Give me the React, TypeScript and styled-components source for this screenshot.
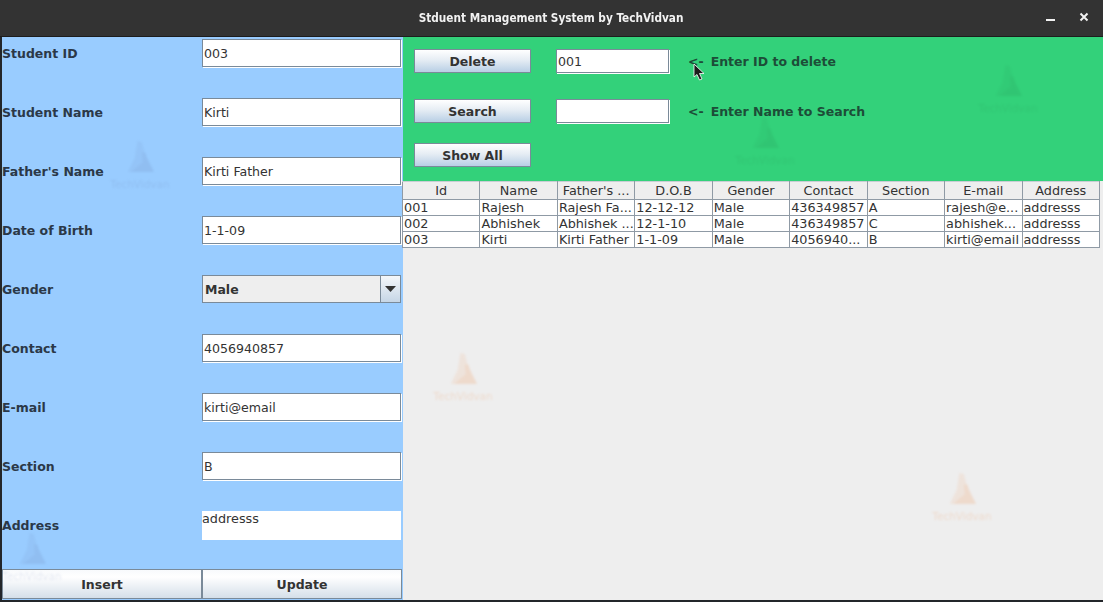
import { Fragment } from "react";
import styled, { createGlobalStyle } from "styled-components";

const GlobalStyle = createGlobalStyle`
  html, body {
    margin: 0;
    height: 100%;
    overflow: hidden;
    background: #23262a;
  }
  * { box-sizing: border-box; }
`;

const FIELDS_BEFORE = [
  { label: "Student ID", value: "003" },
  { label: "Student Name", value: "Kirti" },
  { label: "Father's Name", value: "Kirti Father" },
  { label: "Date of Birth", value: "1-1-09" },
];
const FIELDS_AFTER = [
  { label: "Contact", value: "4056940857" },
  { label: "E-mail", value: "kirti@email" },
  { label: "Section", value: "B" },
];

const COLUMNS = ["Id", "Name", "Father's ...", "D.O.B", "Gender", "Contact", "Section", "E-mail", "Address"];
const ROWS = [
  ["001", "Rajesh", "Rajesh Fa...", "12-12-12", "Male", "436349857", "A", "rajesh@e...", "addresss"],
  ["002", "Abhishek", "Abhishek ...", "12-1-10", "Male", "436349857", "C", "abhishek...", "addresss"],
  ["003", "Kirti", "Kirti Father", "1-1-09", "Male", "4056940...", "B", "kirti@email", "addresss"],
];

const MARKS = [
  { x: 108, y: 140, color: "#6f88bb", opacity: 0.2 },
  { x: 976, y: 64, color: "#2a9f5c", opacity: 0.22 },
  { x: 733, y: 116, color: "#2a9f5c", opacity: 0.22 },
  { x: 431, y: 352, color: "#eeb48c", opacity: 0.34 },
  { x: 930, y: 472, color: "#eeb48c", opacity: 0.34 },
  { x: 0, y: 532, color: "#6f88bb", opacity: 0.2 },
];

const Window = styled.div`
  position: relative;
  width: 1103px;
  height: 602px;
  overflow: hidden;
  font-family: "DejaVu Sans", sans-serif;
  background: #23262a;
`;

const TitleBar = styled.header`
  height: 37px;
  display: flex;
  align-items: center;
  justify-content: center;
  background: #333333;
  border-bottom: 1px solid #1d1d1d;
`;

const Title = styled.h1`
  margin: 0 0 1px 0;
  color: #f2f2f2;
  font-family: "DejaVu Sans Condensed", "DejaVu Sans", sans-serif;
  font-size: 13px;
  font-weight: 700;
  white-space: nowrap;
  transform: scaleX(0.9);
`;

const WindowButtons = styled.div`
  position: absolute;
  top: 12px;
  right: 14px;
  display: flex;
  align-items: center;
  gap: 24px;
`;

const Body = styled.main`
  display: grid;
  grid-template-columns: 401px 1fr;
  height: 563px;
  padding-left: 2px;
`;

const FormPanel = styled.section`
  display: flex;
  flex-direction: column;
  height: 563px;
  padding-top: 2px;
  background: #99ccff;
`;

const FormGrid = styled.div`
  flex: 1;
  display: grid;
  grid-template-columns: 200px 199px;
  grid-auto-rows: 28px;
  row-gap: 31px;
  align-items: stretch;
`;

const FieldLabel = styled.label`
  display: flex;
  align-items: center;
  padding-top: 1px;
  color: #2b3848;
  font-size: 12.5px;
  font-weight: 700;
`;

const TextInput = styled.input`
  width: 100%;
  height: 100%;
  padding: 0 1px;
  border: 1px solid #7a8a99;
  box-shadow: 1px 1px 0 #ffffff;
  background: #ffffff;
  color: #333333;
  font-family: inherit;
  font-size: 12.6px;
  outline: none;
`;

const Combo = styled.div`
  display: grid;
  grid-template-columns: 1fr 19px;
  height: 100%;
  border: 1px solid #7a8a99;
  background: #eeeeee;
`;

const ComboValue = styled.span`
  display: flex;
  align-items: center;
  padding-left: 2px;
  border-right: 1px solid #7a8a99;
  color: #333333;
  font-size: 12.5px;
  font-weight: 700;
`;

const ComboArrow = styled.span`
  display: flex;
  align-items: center;
  justify-content: center;
  background: linear-gradient(#f4f7fa, #c6d6e6);
`;

const AddressInput = styled.textarea`
  display: block;
  width: 199px;
  height: 29px;
  padding: 0;
  border: 0;
  resize: none;
  overflow: hidden;
  background: #ffffff;
  color: #333333;
  font-family: inherit;
  font-size: 12.8px;
  line-height: 15px;
  outline: none;
`;

const FormActions = styled.div`
  display: grid;
  grid-template-columns: 200px 200px;
  height: 30px;
  margin-bottom: 1px;
`;

const MetalButton = styled.button`
  padding: 0;
  border: 1px solid #7a8a99;
  background: linear-gradient(#ffffff 0%, #e6edf4 45%, #b8cfe5 100%);
  color: #333333;
  font-family: inherit;
  font-size: 12.5px;
  font-weight: 700;
`;

const ActionButton = styled(MetalButton)`
  background: linear-gradient(#f8fafc 0%, #ffffff 25%, #d5dfe9 100%);
`;

const RightPanel = styled.section`
  display: flex;
  flex-direction: column;
  height: 563px;
  background: #eeeeee;
`;

const Controls = styled.div`
  display: grid;
  grid-template-columns: 117px 113px 1fr;
  grid-template-rows: 50px 44px 24px;
  column-gap: 25px;
  height: 144px;
  padding: 12px 0 0 11px;
  background: #33d17a;
`;

const ControlButton = styled(MetalButton)`
  grid-column: 1;
  height: 24px;
`;

const SmallInput = styled(TextInput)`
  grid-column: 2;
  height: 24px;
`;

const Hint = styled.span`
  display: flex;
  gap: 7px;
  height: 24px;
  align-items: center;
  margin-left: -6px;
  color: #1d4d38;
  font-size: 12.5px;
  font-weight: 700;
`;

const TableBox = styled.table`
  width: 698px;
  margin-left: -1px;
  border-collapse: collapse;
  table-layout: fixed;
  color: #333333;
  font-size: 12.8px;
`;

const HeadCell = styled.th`
  height: 18px;
  padding: 0 0 1px;
  border: 1px solid #8f9aa5;
  border-top-color: #c8ced4;
  background: #eeeeee;
  font-weight: 400;
  text-align: center;
  white-space: nowrap;
  overflow: hidden;
`;

const Cell = styled.td`
  height: 16px;
  padding: 0 0 0 1px;
  border: 1px solid #8f9aa5;
  background: #ffffff;
  line-height: 14px;
  white-space: nowrap;
  overflow: hidden;
`;

const MarkBox = styled.div<{ $x: number; $y: number; $color: string; $opacity: number }>`
  position: absolute;
  left: ${(p) => p.$x}px;
  top: ${(p) => p.$y}px;
  width: 64px;
  display: flex;
  flex-direction: column;
  align-items: center;
  gap: 5px;
  color: ${(p) => p.$color};
  opacity: ${(p) => p.$opacity};
  pointer-events: none;
  filter: blur(0.8px);
`;

const MarkText = styled.span`
  font-size: 10.5px;
  line-height: 11px;
  white-space: nowrap;
`;

const Pointer = styled.svg`
  position: absolute;
  left: 693px;
  top: 63px;
`;

function Mark(props: { x: number; y: number; color: string; opacity: number }) {
  return (
    <MarkBox $x={props.x} $y={props.y} $color={props.color} $opacity={props.opacity}>
      <svg width="30" height="34" viewBox="0 0 34 38" fill="currentColor">
        <path d="M14 1 L19 2 L22 13 L31 36 L3 36 L11 20 Z" opacity="0.55" />
        <path d="M19 14 L23 14 L25 20 L33 36 L7 36 L15 29 L20 25 Z" />
      </svg>
      <MarkText>TechVidvan</MarkText>
    </MarkBox>
  );
}

export default function App() {
  return (
    <Window>
      <GlobalStyle />
      <TitleBar>
        <Title>Stduent Management System by TechVidvan</Title>
        <WindowButtons>
          <svg width="9" height="9" viewBox="0 0 9 9">
            <rect x="0" y="6" width="9" height="2" fill="#f2f2f2" />
          </svg>
          <svg width="10" height="10" viewBox="0 0 10 10">
            <path d="M1.5 1.5 L8.5 8.5 M8.5 1.5 L1.5 8.5" stroke="#f2f2f2" strokeWidth="2" />
          </svg>
        </WindowButtons>
      </TitleBar>
      <Body>
        <FormPanel>
          <FormGrid>
            {FIELDS_BEFORE.map((f) => (
              <Fragment key={f.label}>
                <FieldLabel>{f.label}</FieldLabel>
                <TextInput readOnly value={f.value} />
              </Fragment>
            ))}
            <FieldLabel>Gender</FieldLabel>
            <Combo>
              <ComboValue>Male</ComboValue>
              <ComboArrow>
                <svg width="11" height="6" viewBox="0 0 11 6">
                  <path d="M0 0 H11 L5.5 6 Z" fill="#333333" />
                </svg>
              </ComboArrow>
            </Combo>
            {FIELDS_AFTER.map((f) => (
              <Fragment key={f.label}>
                <FieldLabel>{f.label}</FieldLabel>
                <TextInput readOnly value={f.value} />
              </Fragment>
            ))}
            <FieldLabel>Address</FieldLabel>
            <AddressInput readOnly value="addresss" />
          </FormGrid>
          <FormActions>
            <ActionButton>Insert</ActionButton>
            <ActionButton>Update</ActionButton>
          </FormActions>
        </FormPanel>
        <RightPanel>
          <Controls>
            <ControlButton>Delete</ControlButton>
            <SmallInput readOnly value="001" />
            <Hint>
              <span>&lt;-</span>
              <span>Enter ID to delete</span>
            </Hint>
            <ControlButton>Search</ControlButton>
            <SmallInput readOnly value="" />
            <Hint>
              <span>&lt;-</span>
              <span>Enter Name to Search</span>
            </Hint>
            <ControlButton>Show All</ControlButton>
          </Controls>
          <TableBox>
            <thead>
              <tr>
                {COLUMNS.map((c) => (
                  <HeadCell key={c}>{c}</HeadCell>
                ))}
              </tr>
            </thead>
            <tbody>
              {ROWS.map((row) => (
                <tr key={row[0]}>
                  {row.map((v, i) => (
                    <Cell key={i}>{v}</Cell>
                  ))}
                </tr>
              ))}
            </tbody>
          </TableBox>
        </RightPanel>
      </Body>
      {MARKS.map((m) => (
        <Mark key={m.x} {...m} />
      ))}
      <Pointer width="14" height="19" viewBox="0 0 14 19">
        <path d="M1 1 L1 14 L4 11.5 L6.5 17 L9 16 L6.5 10.5 L11 10.5 Z" fill="#1c1c1c" stroke="#ffffff" strokeWidth="0.8" />
      </Pointer>
    </Window>
  );
}
